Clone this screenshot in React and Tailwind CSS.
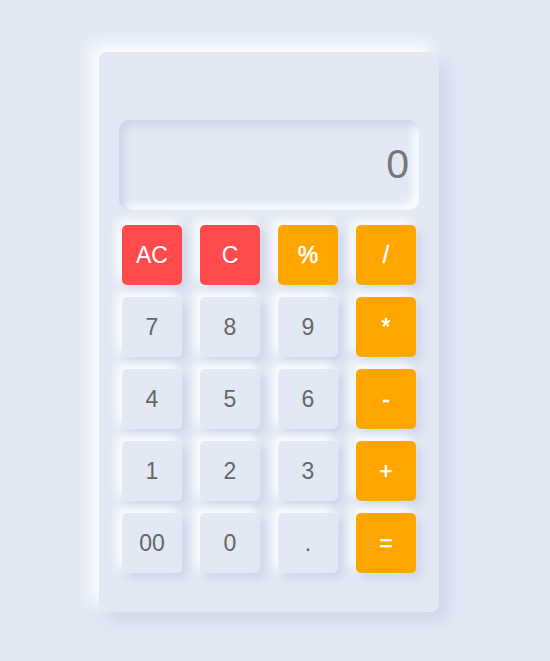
import React from "react";

const rows = [
  [["AC", "red"], ["C", "red"], ["%", "org"], ["/", "org"]],
  [["7"], ["8"], ["9"], ["*", "org"]],
  [["4"], ["5"], ["6"], ["-", "org"]],
  [["1"], ["2"], ["3"], ["+", "org"]],
  [["00"], ["0"], ["."], ["=", "org"]],
];

function Btn({ label, kind }) {
  const base =
    "w-[60px] h-[60px] rounded-[5px] flex items-center justify-center text-[23px] shadow-[-5px_-5px_10px_rgba(255,255,255,0.9),5px_5px_10px_#ccd4ea]";
  const color =
    kind === "red"
      ? "bg-[#ff4b4b] text-white"
      : kind === "org"
      ? "bg-[#ffa500] text-white [-webkit-text-stroke:0.5px_white]"
      : "bg-[#e3e9f4] text-[#666666]";
  return <div className={`${base} ${color}`}>{label}</div>;
}

export default function App() {
  return (
    <div
      className="w-[550px] h-[661px] bg-[#e3e9f4] pt-[52px] pl-[99px]"
      style={{ fontFamily: '"Liberation Sans", Arial, sans-serif' }}
    >
      <div className="w-[340px] h-[560px] rounded-[8px] bg-[#e3e9f4] shadow-[-8px_-8px_16px_rgba(255,255,255,0.9),8px_8px_16px_#ccd4ea] px-[20px] pt-[68px]">
        <div className="h-[90px] w-[300px] rounded-[10px] bg-[#e3e9f4] shadow-[inset_5px_5px_8px_#cdd4ea,inset_-5px_-5px_8px_rgba(255,255,255,0.9)] flex items-center justify-end pr-[10px] text-[41px] text-[#777777]">
          0
        </div>
        <div className="mt-[15px] px-[3px] flex flex-col gap-[12px]">
          {rows.map((r, i) => (
            <div key={i} className="flex gap-[18px]">
              {r.map(([l, k]) => (
                <Btn key={l} label={l} kind={k} />
              ))}
            </div>
          ))}
        </div>
      </div>
    </div>
  );
}
